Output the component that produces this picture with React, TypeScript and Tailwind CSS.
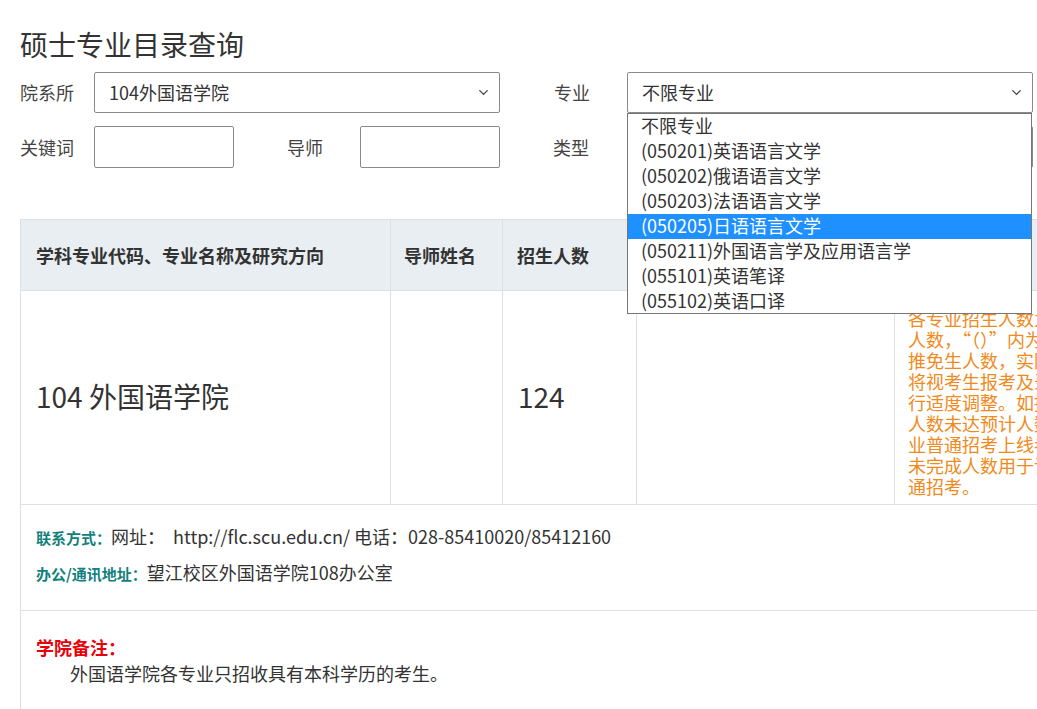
import React from 'react';
import { ChevronDown } from 'lucide-react';

const font = { fontFamily: '"Noto Sans CJK SC", "Noto Sans", sans-serif' };

const majors = [
    '不限专业',
    '(050201)英语语言文学',
    '(050202)俄语语言文学',
    '(050203)法语语言文学',
    '(050205)日语语言文学',
    '(050211)外国语言学及应用语言学',
    '(055101)英语笔译',
    '(055102)英语口译',
];

const noteLines = [
    '各专业招生人数为预计招生',
    '人数，“（）”内为拟接收',
    '推免生人数，实际招生人数',
    '将视考生报考及录取情况进',
    '行适度调整。如推免生接收',
    '人数未达预计人数，则该专',
    '业普通招考上线考生中增加',
    '未完成人数用于该专业普',
    '通招考。',
];

const SelectBox = ({ value, className }: { value: string; className: string }) => (
    <div className={`flex items-center justify-between border border-[#8a8a8a] rounded-[2px] pl-[14px] pr-[8px] text-[18px] text-[#333] bg-white ${className}`}>
        <span>{value}</span>
        <ChevronDown size={15} strokeWidth={2.2} className="text-[#444]" />
    </div>
);

const Label = ({ children, className = '' }: { children: React.ReactNode; className?: string }) => (
    <div className={`text-[18px] text-[#444] ${className}`}>{children}</div>
);

export default function App() {
    return (
        <div className="relative w-[1037px] h-[709px] overflow-hidden bg-white pl-5" style={font}>
            {/* Title */}
            <h1 className="pt-[25px] text-[28px] leading-[38px] text-[#333]">硕士专业目录查询</h1>

            {/* Filters */}
            <div className="mt-[9px] flex items-center h-[41px]">
                <Label className="w-[74px]">院系所</Label>
                <SelectBox value="104外国语学院" className="w-[406px] h-[41px]" />
                <Label className="w-[127px] pl-[54px]">专业</Label>
                <SelectBox value="不限专业" className="w-[406px] h-[41px]" />
            </div>
            <div className="mt-[13px] flex items-center h-[42px]">
                <Label className="w-[74px]">关键词</Label>
                <div className="w-[140px] h-[42px] border border-[#8a8a8a] rounded-[2px]" />
                <Label className="w-[126px] pl-[53px]">导师</Label>
                <div className="w-[140px] h-[42px] border border-[#8a8a8a] rounded-[2px]" />
                <Label className="w-[127px] pl-[53px]">类型</Label>
                <div className="w-[406px] h-[42px] border border-[#8a8a8a] rounded-[2px]" />
            </div>

            {/* Table */}
            <table className="mt-[51px] table-fixed border-collapse w-[1340px] text-[#333]">
                <colgroup>
                    <col className="w-[370px]" />
                    <col className="w-[112px]" />
                    <col className="w-[134px]" />
                    <col className="w-[258px]" />
                    <col className="w-[466px]" />
                </colgroup>
                <thead>
                    <tr className="h-[71px] bg-[#e9eef3]">
                        <th className="border border-[#dcdfe3] text-left pl-[15px] text-[18px] font-bold">学科专业代码、专业名称及研究方向</th>
                        <th className="border border-[#dcdfe3] text-left pl-[13px] text-[18px] font-bold">导师姓名</th>
                        <th className="border border-[#dcdfe3] text-left pl-[14px] text-[18px] font-bold">招生人数</th>
                        <th className="border border-[#dcdfe3] text-left pl-[14px] text-[18px] font-bold">考试科目</th>
                        <th className="border border-[#dcdfe3] text-left pl-[14px] text-[18px] font-bold">备注</th>
                    </tr>
                </thead>
                <tbody>
                    <tr className="h-[214px]">
                        <td className="border border-[#dcdfe3] pl-[15px] pb-[4px] text-[28px]">104 外国语学院</td>
                        <td className="border border-[#dcdfe3]" />
                        <td className="border border-[#dcdfe3] pl-[15px] pb-[4px] text-[28px]">124</td>
                        <td className="border border-[#dcdfe3]" />
                        <td className="border border-[#dcdfe3] align-top pl-[13px] pt-[17px]">
                            <div className="text-[18px] leading-[21px] text-[#f08a1c]">
                                {noteLines.map((l) => (
                                    <div key={l} className="whitespace-nowrap">{l}</div>
                                ))}
                            </div>
                        </td>
                    </tr>
                    <tr className="h-[106px]">
                        <td colSpan={5} className="border border-[#dcdfe3] pl-[15px] align-top pt-[18px]">
                            <div className="flex items-baseline h-[36px]">
                                <span className="text-[15px] font-bold text-[#12807c]">联系方式：</span>
                                <span className="text-[18px]">网址：&nbsp;&nbsp;http://flc.scu.edu.cn/ 电话：028-85410020/85412160</span>
                            </div>
                            <div className="flex items-baseline h-[36px]">
                                <span className="text-[15px] font-bold text-[#12807c]">办公/通讯地址：</span>
                                <span className="text-[18px]">望江校区外国语学院108办公室</span>
                            </div>
                        </td>
                    </tr>
                    <tr className="h-[120px]">
                        <td colSpan={5} className="border border-[#dcdfe3] pl-[15px] align-top pt-[24px]">
                            <div className="text-[18px] font-bold text-[#e8000b] leading-[24px]">学院备注：</div>
                            <div className="text-[18px] pl-[34px] leading-[29px]">外国语学院各专业只招收具有本科学历的考生。</div>
                        </td>
                    </tr>
                </tbody>
            </table>

            {/* Open dropdown of 专业 */}
            <ul className="absolute left-[627px] top-[113px] w-[405px] h-[201px] bg-white border border-[#767676] text-[18px] text-[#333]">
                {majors.map((m, i) => (
                    <li
                        key={m}
                        className={`h-[25px] leading-[23px] pl-[13px] ${i === 4 ? 'bg-[#1e90ff] text-white' : ''}`}
                    >
                        {m}
                    </li>
                ))}
            </ul>
        </div>
    );
}
